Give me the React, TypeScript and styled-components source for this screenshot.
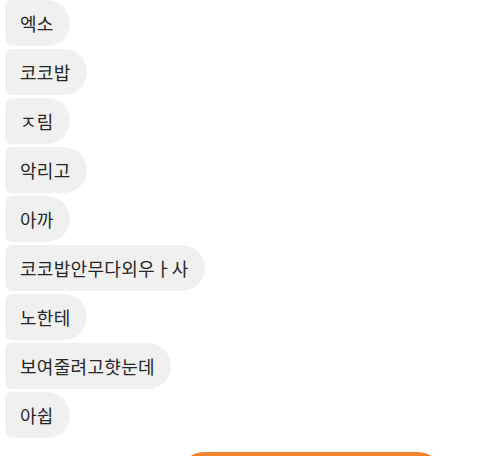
import * as React from 'react';
import styled, { createGlobalStyle } from 'styled-components';

const GlobalStyle = createGlobalStyle`
    html, body {
        margin: 0;
        padding: 0;
        background: #ffffff;
    }
    body {
        width: 480px;
        height: 456px;
        overflow: hidden;
        font-family: "Noto Sans CJK KR", "Noto Sans", sans-serif;
    }
`;

const messages = [
    '엑소',
    '코코밥',
    'ㅈ림',
    '악리고',
    '아까',
    '코코밥안무다외우ㅏ사',
    '노한테',
    '보여줄려고햣눈데',
    '아쉽',
];

export default function App() {
    return (
        <>
            <GlobalStyle />
            <Chat>
                <MessageList>
                    {messages.map((text, i) => (
                        <Bubble key={i}>{text}</Bubble>
                    ))}
                </MessageList>
                <Footer>
                    <ActionButton />
                </Footer>
            </Chat>
        </>
    );
}

const Chat = styled.div`
    display: flex;
    flex-direction: column;
    padding-left: 5px;
`;

const MessageList = styled.div`
    display: flex;
    flex-direction: column;
    align-items: flex-start;
    gap: 3px;
`;

const Bubble = styled.div`
    display: flex;
    align-items: center;
    height: 46px;
    padding: 0 16px 1px 15px;
    box-sizing: border-box;
    background: #f0f0f0;
    color: #262626;
    font-size: 18px;
    letter-spacing: 0.3px;
    border-radius: 7px 23px 23px 7px;
    white-space: nowrap;
`;

const Footer = styled.div`
    display: flex;
    padding: 14px 0 0 175px;
`;

const ActionButton = styled.div`
    width: 262px;
    height: 48px;
    background: #f5822c;
    border-radius: 24px;
`;
